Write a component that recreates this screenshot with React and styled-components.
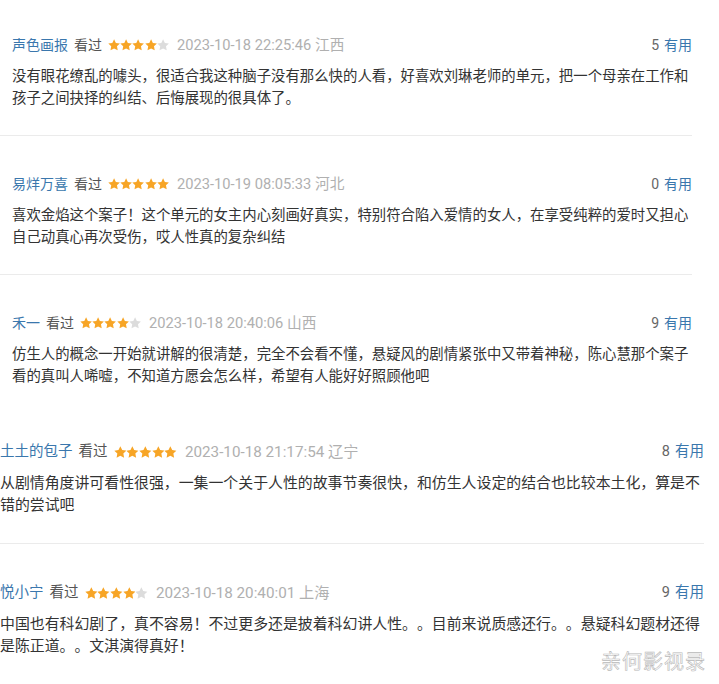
import React from "react";
import styled, { createGlobalStyle } from "styled-components";

const GlobalStyle = createGlobalStyle`
  body {
    margin: 0;
    background: #fff;
    font-family: Roboto, "Noto Sans CJK SC", sans-serif;
  }
`;

const Page = styled.div`
  position: relative;
  width: 719px;
  height: 684px;
  overflow: hidden;
  background: #fff;
`;

const Item = styled.div`
  margin-right: ${(p) => p.$right}px;
  padding: ${(p) => p.$top}px 0 ${(p) => p.$bottom}px ${(p) => p.$left}px;
  border-bottom: ${(p) => (p.$divider ? "1px solid #ebebeb" : "none")};
`;

const Header = styled.div`
  display: flex;
  align-items: center;
  height: 20px;
  font-size: ${(p) => p.$size}px;
  line-height: 20px;
  white-space: nowrap;
`;

const Meta = styled.div`
  display: flex;
  align-items: center;
  gap: 6px;
  flex: 1;
`;

const User = styled.span`
  color: #3a77ad;
`;

const Watched = styled.span`
  color: #555;
`;

const Stars = styled.span`
  display: inline-flex;
  align-items: center;
  margin: 0 2px 0 0;
`;

const Time = styled.span`
  color: #b0b0b0;
  font-size: 1.05em;
`;

const Useful = styled.div`
  color: #666;
  display: flex;
  gap: 5px;
`;

const UsefulLink = styled.span`
  color: #3a77ad;
`;

const Body = styled.p`
  margin: 9px 0 0;
  font-size: ${(p) => p.$size}px;
  line-height: 22px;
  color: #333;
  font-family: "Noto Sans CJK SC", sans-serif;
  text-spacing-trim: space-all;
`;

const Watermark = styled.div`
  position: absolute;
  right: 13px;
  bottom: 11px;
  font-family: "Noto Sans CJK SC", sans-serif;
  font-size: 20px;
  line-height: 24px;
  letter-spacing: 1px;
  color: #fff;
  -webkit-text-stroke: 0.6px #b8b8b8;
`;

const Star = ({ on, size }) => (
  <svg width={size} height={size} viewBox="0 0 24 24">
    <path
      d="M12 0.5l3.5 7.2 7.9 1.1-5.7 5.6 1.4 7.9L12 18.6l-7.1 3.7 1.4-7.9L0.6 8.8l7.9-1.1z"
      fill={on ? "#f7a526" : "#dcdcdc"}
    />
  </svg>
);

const reviews = [
  {
    user: "声色画报",
    rating: 4,
    time: "2023-10-18 22:25:46 江西",
    useful: 5,
    text: "没有眼花缭乱的噱头，很适合我这种脑子没有那么快的人看，好喜欢刘琳老师的单元，把一个母亲在工作和孩子之间抉择的纠结、后悔展现的很具体了。",
    box: { top: 35, bottom: 27, left: 12, right: 27, divider: true, body: 14.4, head: 14 },
  },
  {
    user: "易烊万喜",
    rating: 5,
    time: "2023-10-19 08:05:33 河北",
    useful: 0,
    text: "喜欢金焰这个案子！这个单元的女主内心刻画好真实，特别符合陷入爱情的女人，在享受纯粹的爱时又担心自己动真心再次受伤，哎人性真的复杂纠结",
    box: { top: 38, bottom: 27, left: 12, right: 27, divider: true, body: 14.4, head: 14 },
  },
  {
    user: "禾一",
    rating: 4,
    time: "2023-10-18 20:40:06 山西",
    useful: 9,
    text: "仿生人的概念一开始就讲解的很清楚，完全不会看不懂，悬疑风的剧情紧张中又带着神秘，陈心慧那个案子看的真叫人唏嘘，不知道方愿会怎么样，希望有人能好好照顾他吧",
    box: { top: 38, bottom: 27, left: 12, right: 27, divider: false, body: 14.4, head: 14 },
  },
  {
    user: "土土的包子",
    rating: 5,
    time: "2023-10-18 21:17:54 辽宁",
    useful: 8,
    text: "从剧情角度讲可看性很强，一集一个关于人性的故事节奏很快，和仿生人设定的结合也比较本土化，算是不错的尝试吧",
    box: { top: 29, bottom: 28, left: 0, right: 15, divider: true, body: 14.9, head: 14.5 },
  },
  {
    user: "悦小宁",
    rating: 4,
    time: "2023-10-18 20:40:01 上海",
    useful: 9,
    text: "中国也有科幻剧了，真不容易！不过更多还是披着科幻讲人性。。目前来说质感还行。。悬疑科幻题材还得是陈正道。。文淇演得真好！",
    box: { top: 39, bottom: 20, left: 0, right: 15, divider: false, body: 14.9, head: 14.5 },
  },
];

const App = () => {
  return (
    <Page>
      <GlobalStyle />
      {reviews.map((r) => (
        <Item
          key={r.user}
          $top={r.box.top}
          $bottom={r.box.bottom}
          $left={r.box.left}
          $right={r.box.right}
          $divider={r.box.divider}
        >
          <Header $size={r.box.head}>
            <Meta>
              <User>{r.user}</User>
              <Watched>看过</Watched>
              <Stars>
                {[1, 2, 3, 4, 5].map((n) => (
                  <Star key={n} on={n <= r.rating} size={r.box.head - 1.8} />
                ))}
              </Stars>
              <Time>{r.time}</Time>
            </Meta>
            <Useful>
              {r.useful}
              <UsefulLink>有用</UsefulLink>
            </Useful>
          </Header>
          <Body $size={r.box.body}>{r.text}</Body>
        </Item>
      ))}
      <Watermark>亲何影视录</Watermark>
    </Page>
  );
};

export default App;
